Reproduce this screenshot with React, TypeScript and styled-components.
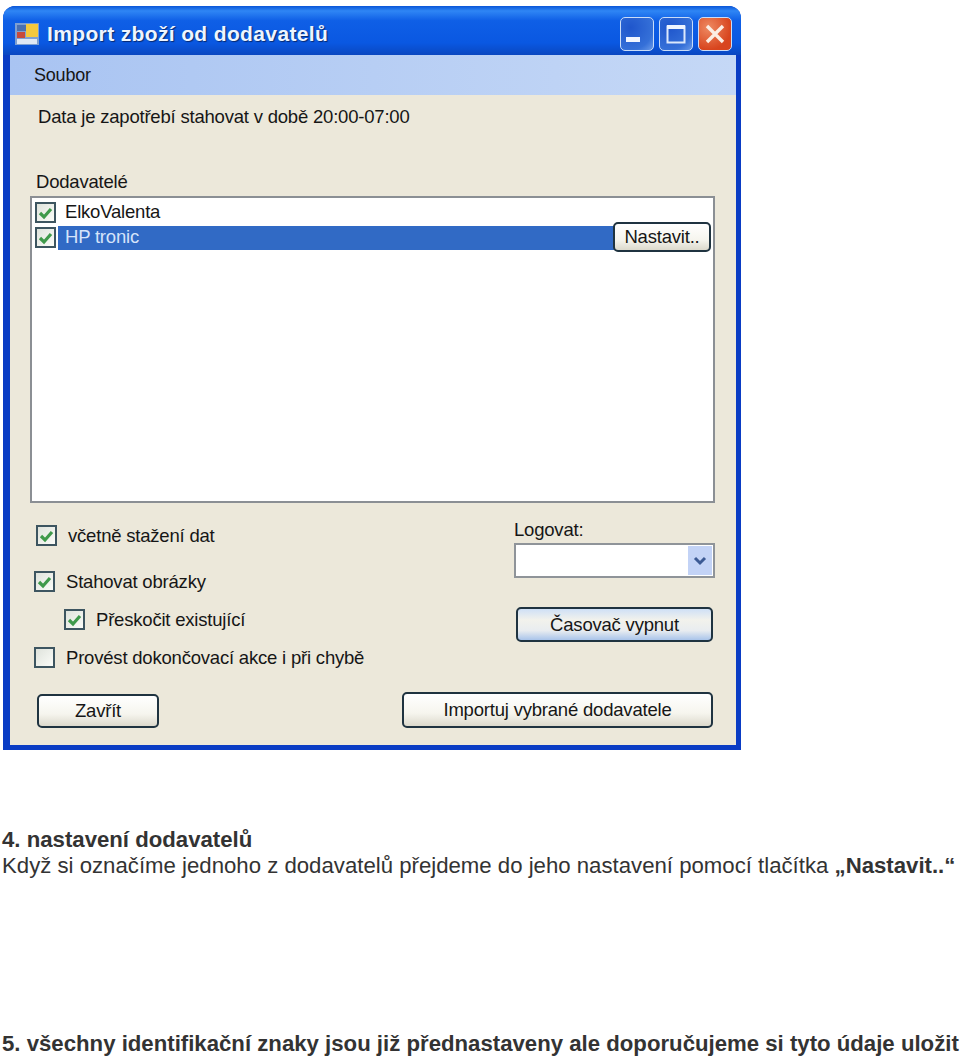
import React from "react";
import styled, { createGlobalStyle } from "styled-components";

const GlobalStyle = createGlobalStyle`
  html, body {
    margin: 0;
    padding: 0;
    background: #fff;
    overflow: hidden;
  }
`;

const Page = styled.div`
  width: 960px;
  height: 1058px;
  overflow: hidden;
  padding: 6px 0 0 3px;
  box-sizing: border-box;
`;

const XpWindow = styled.div`
  width: 738px;
  height: 744px;
  box-sizing: border-box;
  display: flex;
  flex-direction: column;
  border-radius: 12px 12px 0 0;
  background: #0a3cc4;
  padding: 0 5px 5px 7px;
  font-family: "Liberation Sans", Arial, sans-serif;
  font-size: 18.5px;
  letter-spacing: -0.2px;
  color: #161616;
`;

const TitleBar = styled.div`
  height: 49px;
  margin: 0 -5px 0 -7px;
  padding: 10px 9px 4px 12px;
  box-sizing: border-box;
  display: flex;
  align-items: center;
  border-radius: 12px 12px 0 0;
  background: linear-gradient(180deg, #0a56d8 0%, #2f86f5 10%, #0f5fe6 30%, #0a58e2 75%, #0a47c0 100%);
`;

const TitleText = styled.div`
  margin-left: 8px;
  flex: 1;
  color: #eef5ff;
  font-size: 21px;
  font-weight: 700;
  letter-spacing: 0.36px;
  text-shadow: 1px 1px 1px #06296f;
`;

const CaptionButton = styled.div<{ $close?: boolean }>`
  width: 34px;
  height: 34px;
  margin-left: 5px;
  box-sizing: border-box;
  display: flex;
  align-items: center;
  justify-content: center;
  border: 1.5px solid #c9dcf8;
  border-radius: 5px;
  background: ${(p) =>
    p.$close
      ? "radial-gradient(circle at 30% 30%, #ee8a62, #d8451e 70%)"
      : "radial-gradient(circle at 30% 30%, #1f56cc, #3570d8 70%, #6b9bea)"};
`;

const MenuBar = styled.div`
  height: 40px;
  padding-left: 24px;
  display: flex;
  align-items: center;
  font-size: 18px;
  background: linear-gradient(90deg, #a9c4f2, #c5d8f6);
`;

const Client = styled.div`
  flex: 1;
  background: #ece8da;
  padding: 11px 21px 0 20px;
  display: flex;
  flex-direction: column;
`;

const InfoText = styled.div`
  margin-left: 8px;
  height: 22px;
  line-height: 22px;
`;

const FieldLabel = styled.div`
  margin: 43px 0 3px 6px;
  height: 22px;
  line-height: 22px;
`;

const ListBox = styled.div`
  height: 307px;
  box-sizing: border-box;
  border: 2px solid #8b8f94;
  background: #fff;
  padding: 2px 3px;
  position: relative;
`;

const ListRow = styled.div`
  display: flex;
  align-items: center;
  height: 25px;
`;

const RowLabel = styled.div<{ $selected?: boolean }>`
  flex: 1;
  height: 24px;
  line-height: 22px;
  margin-left: 2px;
  padding-left: 7px;
  color: ${(p) => (p.$selected ? "#d5e4fa" : "#161616")};
  background: ${(p) => (p.$selected ? "#316ac5" : "transparent")};
`;

const Box = styled.div`
  width: 21px;
  height: 21px;
  flex: none;
  box-sizing: border-box;
  border: 2px solid #3d5560;
  background: linear-gradient(135deg, #dfe3dc, #fbfcf8);
  display: flex;
  align-items: center;
  justify-content: center;
`;

const XpButton = styled.div<{ $width: number; $height: number; $focused?: boolean }>`
  width: ${(p) => p.$width}px;
  height: ${(p) => p.$height}px;
  box-sizing: border-box;
  display: flex;
  align-items: center;
  justify-content: center;
  border: 2px solid #1f3340;
  border-radius: 5px;
  background: ${(p) =>
    p.$focused
      ? "linear-gradient(180deg, #cfe0f6 0%, #f2f2ec 35%, #e8ecf0 70%, #a9c4ea 100%)"
      : "linear-gradient(180deg, #ffffff 0%, #f6f5ee 60%, #dcd9cc 100%)"};
`;

const OverlayButton = styled(XpButton)`
  position: absolute;
  top: 24px;
  right: 2px;
`;

const BottomArea = styled.div`
  flex: 1;
  display: flex;
  justify-content: space-between;
`;

const LeftColumn = styled.div`
  display: flex;
  flex-direction: column;
  align-items: flex-start;
  padding-top: 22px;
`;

const CheckRow = styled.div<{ $indent: number; $top: number }>`
  display: flex;
  align-items: center;
  height: 21px;
  margin-left: ${(p) => p.$indent}px;
  margin-top: ${(p) => p.$top}px;
`;

const CheckText = styled.span`
  margin-left: 11px;
`;

const RightColumn = styled.div`
  width: 311px;
  margin-right: 2px;
  display: flex;
  flex-direction: column;
  align-items: flex-end;
  padding-top: 15px;
`;

const LogLabel = styled.div`
  align-self: flex-start;
  margin-left: 112px;
  height: 24px;
  line-height: 24px;
`;

const Combo = styled.div`
  width: 201px;
  height: 35px;
  margin: 1px -2px 0 0;
  box-sizing: border-box;
  border: 2px solid #8f9499;
  background: #fff;
  display: flex;
  justify-content: flex-end;
  padding: 1px;
`;

const ComboArrow = styled.div`
  width: 24px;
  background: #c3d3f6;
  display: flex;
  align-items: center;
  justify-content: center;
`;

const TimerSlot = styled.div`
  margin-top: 29px;
`;

const ImportSlot = styled.div`
  margin-top: 50px;
`;

const CloseSlot = styled.div`
  margin: 26px 0 0 7px;
`;

const Article = styled.div`
  margin: 77px 0 0 -1px;
  font-family: "Liberation Sans", Arial, sans-serif;
  font-size: 22.2px;
  line-height: 26px;
  color: #333;
  white-space: nowrap;
`;

const Line = styled.div``;

const NextHeading = styled.div`
  margin-top: 152px;
  font-weight: 700;
`;

const Check = () => (
  <svg width="15" height="14" viewBox="0 0 15 14">
    <path d="M2 7 L6 11 L13 3" fill="none" stroke="#3f9a4b" strokeWidth="3.2" />
  </svg>
);

const WindowIcon = () => (
  <svg width="24" height="22" viewBox="0 0 24 22">
    <rect x="0" y="0" width="24" height="22" fill="#7f9fd0" />
    <rect x="2" y="2" width="9" height="6" fill="#4a6fb0" />
    <rect x="2" y="9" width="8" height="6" fill="#c84a3a" />
    <rect x="11" y="1" width="12" height="13" fill="#f4c83c" />
    <rect x="2" y="16" width="20" height="5" fill="#dfe7f4" />
  </svg>
);

const Row = ({ label, selected }: { label: string; selected?: boolean }) => (
  <ListRow>
    <Box>
      <Check />
    </Box>
    <RowLabel $selected={selected}>{label}</RowLabel>
  </ListRow>
);

const App: React.FC = () => {
  return (
    <>
      <GlobalStyle />
      <Page>
        <XpWindow>
          <TitleBar>
            <WindowIcon />
            <TitleText>Import zboží od dodavatelů</TitleText>
            <CaptionButton>
              <svg width="24" height="24" viewBox="0 0 24 24">
                <rect x="1" y="15" width="14" height="5" fill="#f2f6ff" />
              </svg>
            </CaptionButton>
            <CaptionButton>
              <svg width="24" height="24" viewBox="0 0 24 24">
                <rect x="3.5" y="4.5" width="17" height="16" fill="none" stroke="#dbe8fb" strokeWidth="2" />
                <rect x="3" y="3" width="18" height="4" fill="#eef4ff" />
              </svg>
            </CaptionButton>
            <CaptionButton $close>
              <svg width="24" height="24" viewBox="0 0 24 24">
                <path d="M4 4 L20 20 M20 4 L4 20" stroke="#fbeee4" strokeWidth="3.4" />
              </svg>
            </CaptionButton>
          </TitleBar>
          <MenuBar>Soubor</MenuBar>
          <Client>
            <InfoText>Data je zapotřebí stahovat v době 20:00-07:00</InfoText>
            <FieldLabel>Dodavatelé</FieldLabel>
            <ListBox>
              <Row label="ElkoValenta" />
              <Row label="HP tronic" selected />
              <OverlayButton $width={98} $height={30}>
                Nastavit..
              </OverlayButton>
            </ListBox>
            <BottomArea>
              <LeftColumn>
                <CheckRow $indent={6} $top={0}>
                  <Box>
                    <Check />
                  </Box>
                  <CheckText>včetně stažení dat</CheckText>
                </CheckRow>
                <CheckRow $indent={4} $top={25}>
                  <Box>
                    <Check />
                  </Box>
                  <CheckText>Stahovat obrázky</CheckText>
                </CheckRow>
                <CheckRow $indent={34} $top={17}>
                  <Box>
                    <Check />
                  </Box>
                  <CheckText>Přeskočit existující</CheckText>
                </CheckRow>
                <CheckRow $indent={4} $top={17}>
                  <Box />
                  <CheckText>Provést dokončovací akce i při chybě</CheckText>
                </CheckRow>
                <CloseSlot>
                  <XpButton $width={122} $height={34}>
                    Zavřít
                  </XpButton>
                </CloseSlot>
              </LeftColumn>
              <RightColumn>
                <LogLabel>Logovat:</LogLabel>
                <Combo>
                  <ComboArrow>
                    <svg width="14" height="12" viewBox="0 0 14 12">
                      <path d="M2 3 L7 8 L12 3" fill="none" stroke="#3c5a94" strokeWidth="3" />
                    </svg>
                  </ComboArrow>
                </Combo>
                <TimerSlot>
                  <XpButton $width={197} $height={35} $focused>
                    Časovač vypnut
                  </XpButton>
                </TimerSlot>
                <ImportSlot>
                  <XpButton $width={311} $height={36}>
                    Importuj vybrané dodavatele
                  </XpButton>
                </ImportSlot>
              </RightColumn>
            </BottomArea>
          </Client>
        </XpWindow>
        <Article>
          <Line>
            <b>4. nastavení dodavatelů</b>
          </Line>
          <Line>
            Když si označíme jednoho z dodavatelů přejdeme do jeho nastavení pomocí tlačítka <b>„Nastavit..“</b>
          </Line>
          <NextHeading>5. všechny identifikační znaky jsou již přednastaveny ale doporučujeme si tyto údaje uložit</NextHeading>
        </Article>
      </Page>
    </>
  );
};

export default App;
